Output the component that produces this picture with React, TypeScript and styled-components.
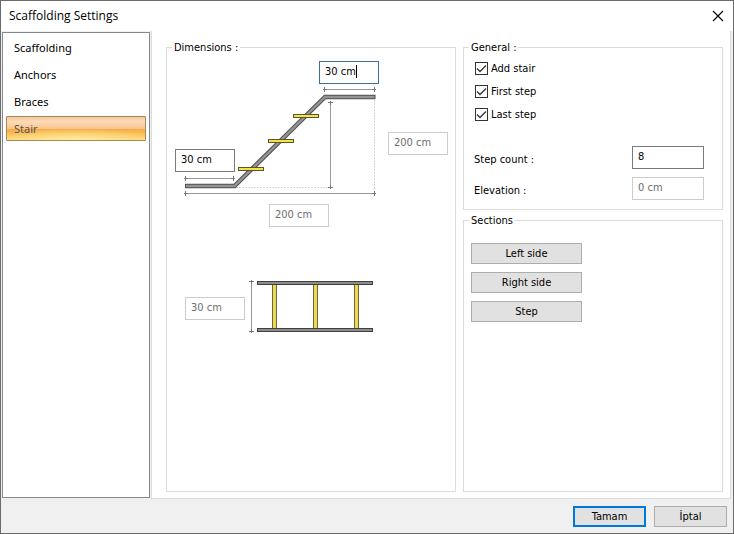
import React, { useState } from "react";
import styled, { createGlobalStyle, css } from "styled-components";

const GlobalStyle = createGlobalStyle`
  *, *::before, *::after { box-sizing: border-box; }
  body { margin: 0; background: #f0f0f0; }
  body, button, input { font-family: "DejaVu Sans Condensed", "Noto Sans", sans-serif; font-size: 11px; line-height: 13px; color: #000; }
`;

const Dialog = styled.main`
  display: flex;
  flex-direction: column;
  min-height: 100vh;
  border: 1px solid #6b6b6b;
  background: #f0f0f0;
`;

const TitleBar = styled.header`
  display: flex;
  align-items: center;
  justify-content: space-between;
  height: 30px;
  padding: 0 9px 0 8px;
  background: #fff;
`;

const Title = styled.h1`
  margin: 0;
  font: 400 12px/16px "Open Sans", sans-serif;
`;

const CloseButton = styled.button`
  display: flex;
  padding: 0;
  border: 0;
  background: none;
`;

const Body = styled.div`
  display: grid;
  grid-template-columns: 148px minmax(0, 1fr);
  gap: 1px;
  flex: 1;
  padding: 0 2px 0 1px;
`;

const Sidebar = styled.nav`
  display: flex;
  flex-direction: column;
  gap: 2px;
  margin: 1px 0;
  padding: 2px 3px;
  border: 1px solid #828790;
  background: #fff;
`;

const SidebarItem = styled.button<{ $selected: boolean }>`
  height: 25px;
  padding: 0 7px;
  border: 1px solid transparent;
  border-radius: 1px;
  background: none;
  font: 400 11px/16px "Noto Sans", sans-serif;
  text-align: left;
  ${(p) =>
    p.$selected &&
    css`
      border-color: #a8895a;
      background:
        radial-gradient(ellipse 60% 50% at 50% 100%, rgba(255, 240, 160, 0.9), rgba(255, 240, 160, 0)),
        linear-gradient(#f5c79c, #fbdab8 20%, #fbc78b 50%, #f8ab4a 54%, #fbc05a 75%, #fdd87c);
      color: #555;
    `}
`;

const Panel = styled.section`
  display: grid;
  grid-template-columns: minmax(290px, 290fr) minmax(260px, 260fr);
  gap: 7px;
  padding: 10px 7px 6px 14px;
  border: 1px solid #dcdcdc;
  border-top: 0;
  background: #fff;
`;

const Column = styled.div`
  display: flex;
  flex-direction: column;
  gap: 4px;
`;

const Group = styled.fieldset<{ $fill?: boolean }>`
  flex: ${(p) => (p.$fill ? 1 : "none")};
  min-width: 0;
  margin: 0;
  padding: 0;
  border: 1px solid #dcdcdc;
`;

const Legend = styled.legend`
  margin-left: 5px;
  padding: 0 2px;
`;

const Diagram = styled.div`
  position: relative;
  width: 288px;
  height: 300px;
`;

const Drawing = styled.svg`
  display: block;
`;

const TextBox = styled.input`
  width: 100%;
  height: 23px;
  padding: 0 5px 2px;
  border: 1px solid #7a7a7a;
  border-radius: 0;
  outline: 0;
  background: #fff;
  &:disabled {
    border-color: #ccc;
    color: #6d6d6d;
  }
`;

const Pin = styled.div<{ $x: number; $y: number; $active?: boolean }>`
  position: absolute;
  left: ${(p) => p.$x}px;
  top: ${(p) => p.$y}px;
  width: 60px;
  ${(p) =>
    p.$active &&
    css`
      ${TextBox} { border-color: #3f6f9f; }
      &::after {
        content: "";
        position: absolute;
        left: 37px;
        top: 4px;
        width: 1px;
        height: 13px;
        background: #000;
      }
    `}
`;

const CheckList = styled.div`
  display: flex;
  flex-direction: column;
  gap: 10px;
  padding: 8px 11px 0;
`;

const CheckLabel = styled.label`
  display: flex;
  align-items: center;
  gap: 3px;
  height: 13px;
`;

const CheckBox = styled.input`
  appearance: none;
  width: 13px;
  height: 13px;
  margin: 0;
  border: 1px solid #333;
  background: #fff;
  &:checked {
    background: url("data:image/svg+xml,%3Csvg xmlns='http://www.w3.org/2000/svg' viewBox='0 0 11 11'%3E%3Cpath d='M1 5.5 4 8.5 10 2.5' fill='none' stroke='%23333' stroke-width='1.3'/%3E%3C/svg%3E");
  }
`;

const Fields = styled.div`
  display: grid;
  grid-template-columns: 1fr 72px;
  align-items: center;
  row-gap: 8px;
  padding: 25px 18px 9px 10px;
`;

const FieldLabel = styled.label`
  padding-top: 4px;
`;

const ButtonStack = styled.div`
  display: flex;
  flex-direction: column;
  gap: 8px;
  width: 111px;
  margin: 16px 0 0 7px;
`;

const PushButton = styled.button<{ $primary?: boolean }>`
  height: 21px;
  padding: 0;
  border: ${(p) => (p.$primary ? "2px solid #0078d7" : "1px solid #adadad")};
  background: #e1e1e1;
`;

const Footer = styled.footer`
  display: grid;
  grid-template-columns: 73px 73px;
  justify-content: end;
  gap: 8px;
  padding: 7px 6px 6px;
`;

const sections = ["Scaffolding", "Anchors", "Braces", "Stair"];

const dimensions = [
  { label: "Top landing length", value: "30 cm", x: 152, y: 7, active: true },
  { label: "Stair height", value: "200 cm", x: 221, y: 78, disabled: true },
  { label: "Bottom landing length", value: "30 cm", x: 8, y: 95 },
  { label: "Stair length", value: "200 cm", x: 102, y: 150, disabled: true },
  { label: "Stair width", value: "30 cm", x: 18, y: 243, disabled: true },
];

const steps = [
  [238, 167],
  [268, 139],
  [293, 114],
];

function StairDrawing() {
  return (
    <Drawing width="288" height="300" viewBox="167 54 288 300" aria-hidden="true">
      <g fill="none" stroke="#d4d4d4" strokeDasharray="2 1">
        <path d="M236 187.5H328" />
        <path d="M374.5 100V190" />
      </g>
      <g fill="none" stroke="#999">
        <path d="M185.5 178.5H233.5M324.5 89.5H374.5M185.5 193.5H374.5M330.5 102V188M251.5 281V332" />
        <path
          stroke="#777"
          d="M185.5 176v5M184 178.5h4M233.5 176v5M231 178.5h4M324.5 87v5M323 89.5h4M374.5 87v5M372 89.5h4M185.5 191v5M184 193.5h4M374.5 191v5M372 193.5h4M328 102.5h5M330.5 101v4M328 187.5h5M330.5 185v4M249 281.5h5M251.5 280v4M249 331.5h5M251.5 329v4"
        />
      </g>
      <path d="M185 186H234.5L325 97H375.5" fill="none" stroke="#505050" strokeWidth="4.4" />
      <path d="M186 186H234.5L325 97H374.5" fill="none" stroke="#949494" strokeWidth="2.4" />
      {steps.map(([x, y]) => (
        <rect key={x} x={x + 0.5} y={y + 0.5} width="25" height="3" fill="#f5e150" stroke="#5c5627" />
      ))}
      {[272, 313, 354].map((x) => (
        <rect key={x} x={x + 0.5} y="284.5" width="4" height="44" fill="#ecd94c" stroke="#6b674c" />
      ))}
      {[281, 328].map((y) => (
        <rect key={y} x="257.5" y={y + 0.5} width="115" height="3" fill="#8c8c8c" stroke="#404040" />
      ))}
    </Drawing>
  );
}

export default function App() {
  const [selected, setSelected] = useState("Stair");
  return (
    <>
      <GlobalStyle />
      <Dialog>
        <TitleBar>
          <Title>Scaffolding Settings</Title>
          <CloseButton aria-label="Close">
            <svg width="12" height="12" viewBox="0 0 12 12" aria-hidden="true">
              <path d="M1 1 11 11M11 1 1 11" stroke="#000" strokeWidth="1.1" />
            </svg>
          </CloseButton>
        </TitleBar>
        <Body>
          <Sidebar>
            {sections.map((name) => (
              <SidebarItem key={name} $selected={name === selected} onClick={() => setSelected(name)}>
                {name}
              </SidebarItem>
            ))}
          </Sidebar>
          <Panel>
            <Group>
              <Legend>Dimensions :</Legend>
              <Diagram>
                <StairDrawing />
                {dimensions.map((d) => (
                  <Pin key={d.label} $x={d.x} $y={d.y} $active={d.active}>
                    <TextBox aria-label={d.label} defaultValue={d.value} disabled={d.disabled} />
                  </Pin>
                ))}
              </Diagram>
            </Group>
            <Column>
              <Group>
                <Legend>General :</Legend>
                <CheckList>
                  {["Add stair", "First step", "Last step"].map((name) => (
                    <CheckLabel key={name}>
                      <CheckBox type="checkbox" defaultChecked />
                      {name}
                    </CheckLabel>
                  ))}
                </CheckList>
                <Fields>
                  <FieldLabel htmlFor="step-count">Step count :</FieldLabel>
                  <TextBox id="step-count" defaultValue="8" />
                  <FieldLabel htmlFor="elevation">Elevation :</FieldLabel>
                  <TextBox id="elevation" defaultValue="0 cm" disabled />
                </Fields>
              </Group>
              <Group $fill>
                <Legend>Sections</Legend>
                <ButtonStack>
                  <PushButton>Left side</PushButton>
                  <PushButton>Right side</PushButton>
                  <PushButton>Step</PushButton>
                </ButtonStack>
              </Group>
            </Column>
          </Panel>
        </Body>
        <Footer>
          <PushButton $primary>Tamam</PushButton>
          <PushButton>İptal</PushButton>
        </Footer>
      </Dialog>
    </>
  );
}
